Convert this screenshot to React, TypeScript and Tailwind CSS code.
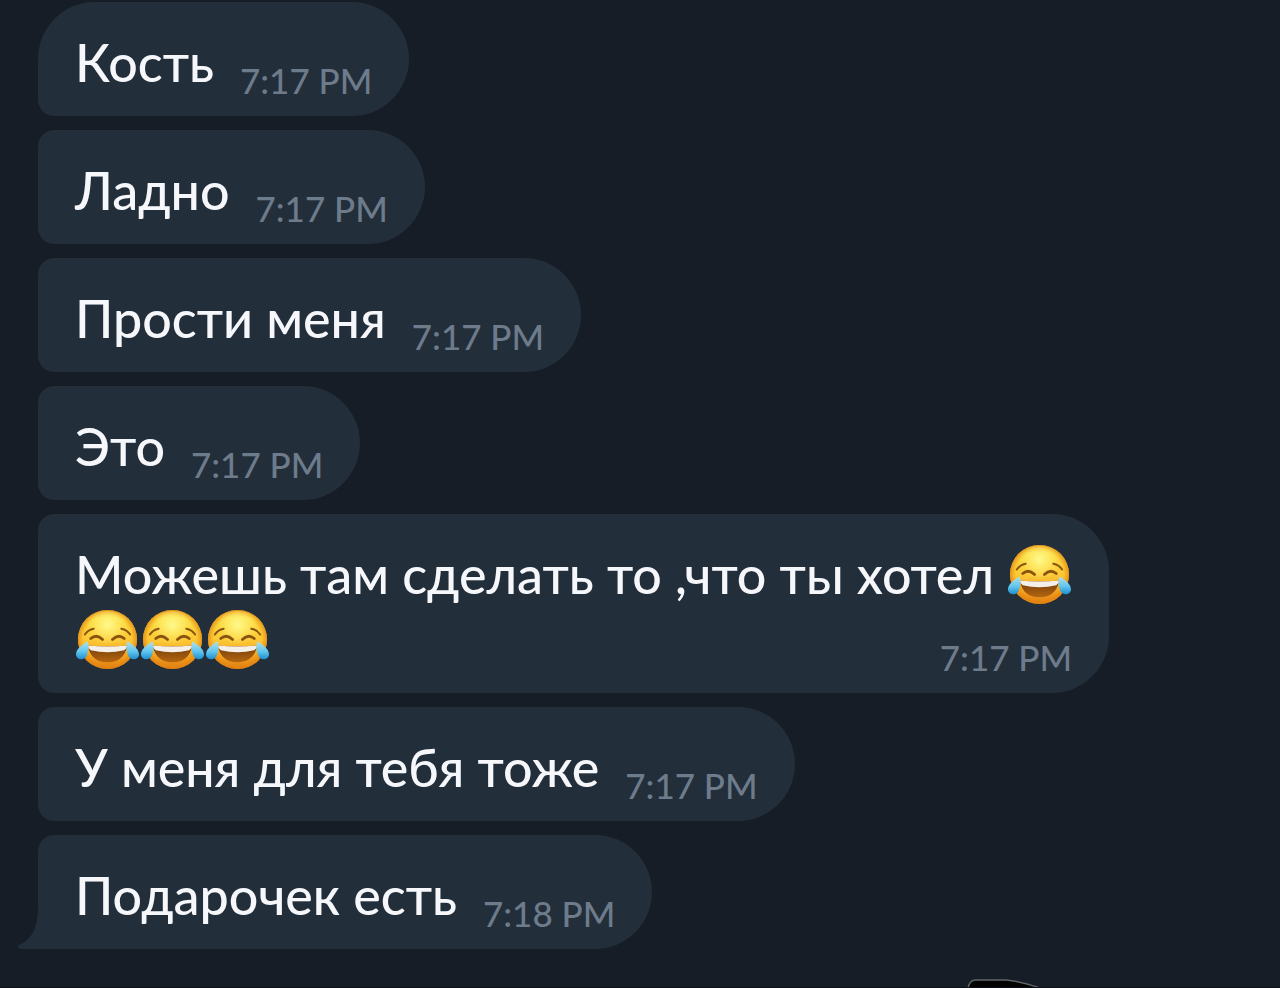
import { clsx } from 'clsx'

type Message = {
  id: number
  lines: string[]
  time: string
}

const messages: Message[] = [
  { id: 1, lines: ['Кость'], time: '7:17 PM' },
  { id: 2, lines: ['Ладно'], time: '7:17 PM' },
  { id: 3, lines: ['Прости меня'], time: '7:17 PM' },
  { id: 4, lines: ['Это'], time: '7:17 PM' },
  { id: 5, lines: ['Можешь там сделать то ,что ты хотел 😂', '😂😂😂'], time: '7:17 PM' },
  { id: 6, lines: ['У меня для тебя тоже'], time: '7:17 PM' },
  { id: 7, lines: ['Подарочек есть'], time: '7:18 PM' },
]

const JoyDefs = () => (
  <svg className="absolute size-0" aria-hidden="true">
    <defs>
      <linearGradient id="joy-face" x1="0" y1="0" x2="0" y2="1">
        <stop offset="0" stopColor="#f3b92b" />
        <stop offset="0.14" stopColor="#fbdc3f" />
        <stop offset="0.5" stopColor="#fcc935" />
        <stop offset="0.8" stopColor="#f2a01f" />
        <stop offset="1" stopColor="#de7c12" />
      </linearGradient>
      <radialGradient id="joy-shine" cx="0.5" cy="0.24" r="0.36">
        <stop offset="0" stopColor="#fffa8c" />
        <stop offset="1" stopColor="#fff67a" stopOpacity="0" />
      </radialGradient>
      <radialGradient id="joy-edge" cx="0.5" cy="0.5" r="0.5">
        <stop offset="0.8" stopColor="#e8890f" stopOpacity="0" />
        <stop offset="1" stopColor="#e0820f" stopOpacity="0.75" />
      </radialGradient>
      <linearGradient id="joy-mouth" x1="0" y1="0" x2="0" y2="1">
        <stop offset="0" stopColor="#6e3c0c" />
        <stop offset="1" stopColor="#b5650f" />
      </linearGradient>
      <linearGradient id="joy-tear" x1="0" y1="0" x2="0" y2="1">
        <stop offset="0" stopColor="#b4e0e6" />
        <stop offset="0.55" stopColor="#62c6ee" />
        <stop offset="1" stopColor="#1f8fd0" />
      </linearGradient>
    </defs>
  </svg>
)

const JoyEmoji = () => (
  <svg viewBox="0 0 66 66" className="inline-block size-[65px] align-top" role="img" aria-label="😂">
    <circle cx="33" cy="33" r="30" fill="url(#joy-face)" />
    <circle cx="33" cy="33" r="30" fill="url(#joy-edge)" />
    <circle cx="33" cy="33" r="29" fill="url(#joy-shine)" />
    <g fill="none" stroke="#8a5410" strokeLinecap="round">
      <path d="M10 28 Q13 23 19 22" strokeWidth="2" />
      <path d="M47 22 Q53 23 56 28" strokeWidth="2" />
      <path d="M16 32 Q22 27 28 33" strokeWidth="2.8" />
      <path d="M38 33 Q44 27 50 32" strokeWidth="2.8" />
    </g>
    <path d="M13 39 Q33 41 53 39 Q50 56 33 56 Q16 56 13 39Z" fill="url(#joy-mouth)" />
    <path d="M13 39 Q33 41 53 39 Q53 42 50 44 Q33 48 16 44 Q13 42 13 39Z" fill="#f5efe9" />
    <path d="M13 35 C9 37 1 42 1 48 C1 54 10 55 12 49 C14 45 14 39 13 35Z" fill="url(#joy-tear)" />
    <path d="M53 35 C57 37 65 42 65 48 C65 54 56 55 54 49 C52 45 52 39 53 35Z" fill="url(#joy-tear)" />
  </svg>
)

// Emoji are drawn, everything else stays plain text
const Line = ({ text }: { text: string }) => (
  <>
    {text.split(/(😂)/).map((part, i) => (part === '😂' ? <JoyEmoji key={i} /> : part))}
  </>
)

const Tail = () => (
  <svg viewBox="0 0 40 42" className="absolute bottom-0 -left-5 h-[42px] w-10" aria-hidden="true">
    <path d="M20 0 C20 20 14 33 1 38 Q-2 41 3 42 H40 V0Z" fill="#222e3a" />
  </svg>
)

const Bubble = ({ message, first, last }: { message: Message; first: boolean; last: boolean }) => {
  const lines = message.lines.slice(0, -1)
  const lastLine = message.lines[message.lines.length - 1]

  return (
    <li
      className={clsx(
        'relative rounded-r-[57px] bg-[#222e3a] px-[37px] pt-7 pb-[21px] text-[52px] leading-[65px] font-medium text-[#f6f7fb]',
        first ? 'rounded-tl-[57px]' : 'rounded-tl-2xl',
        !last && 'rounded-bl-2xl'
      )}
    >
      {last && <Tail />}
      {lines.map((line) => (
        <p key={line} className="whitespace-nowrap">
          <Line text={line} />
        </p>
      ))}
      <div className="flex items-end justify-between gap-[26px]">
        <p className="whitespace-nowrap">
          <Line text={lastLine} />
        </p>
        <time className="-mb-[5px] text-[35px] leading-10 whitespace-nowrap text-[#6d7b8a]">{message.time}</time>
      </div>
    </li>
  )
}

const App = () => {
  return (
    <main className="relative min-h-screen overflow-hidden border-b border-[#0c0f18] bg-[#161d27] font-['Lato','Noto_Sans',sans-serif]">
      <JoyDefs />
      <ul className="flex flex-col items-start gap-3.5 pt-[2px] pb-9 pl-[38px]">
        {messages.map((message, i) => (
          <Bubble key={message.id} message={message} first={i === 0} last={i === messages.length - 1} />
        ))}
      </ul>

      {/* Top edge of the next sticker */}
      <svg viewBox="0 0 76 8" className="absolute bottom-0 left-[966px] h-2 w-[76px]" aria-hidden="true">
        <path d="M2 9 Q4 1 9 1 H40 Q58 3 74 9Z" fill="#020203" stroke="#5d6569" strokeWidth="1.5" />
      </svg>
    </main>
  )
}

export default App
